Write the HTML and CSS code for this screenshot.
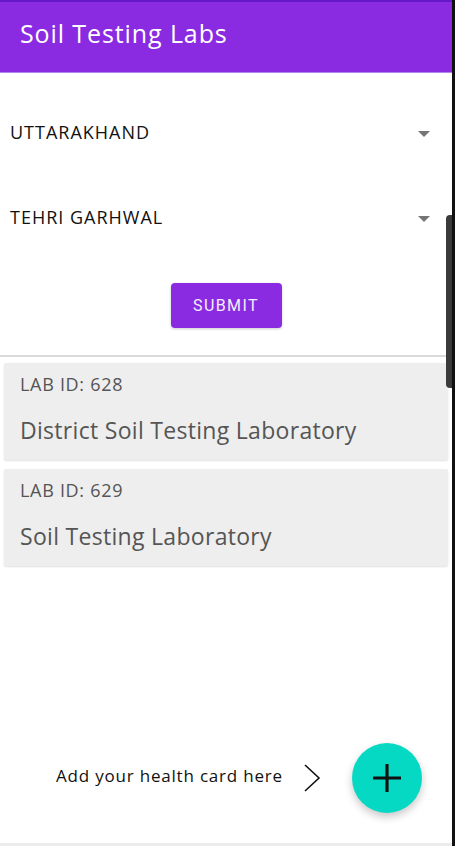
FILE: index.html
```html
<!DOCTYPE html>
<html lang="en">
<head>
<meta charset="utf-8">
<title>Soil Testing Labs</title>
<link rel="stylesheet" href="styles.css">
</head>
<body>
<div class="app">
  <header class="appbar">
    <h1 class="title">Soil Testing Labs</h1>
  </header>
  <main class="content">
    <section class="form">
      <div class="select">
        <span class="select-value">UTTARAKHAND</span>
        <span class="caret"></span>
      </div>
      <div class="select">
        <span class="select-value">TEHRI GARHWAL</span>
        <span class="caret"></span>
      </div>
      <div class="actions">
        <button class="submit">SUBMIT</button>
      </div>
    </section>
    <section class="list">
      <article class="card">
        <div class="lab-id">LAB ID: 628</div>
        <div class="lab-name">District Soil Testing Laboratory</div>
      </article>
      <article class="card">
        <div class="lab-id">LAB ID: 629</div>
        <div class="lab-name">Soil Testing Laboratory</div>
      </article>
    </section>
    <footer class="bottom">
      <span class="hint">Add your health card here</span>
      <svg class="chevron" width="20" height="30" viewBox="0 0 20 30"><path d="M3 2 L17 15 L3 28" fill="none" stroke="#111" stroke-width="1.6"/></svg>
      <button class="fab" aria-label="Add">
        <svg width="34" height="34" viewBox="0 0 34 34"><path d="M17 3 V31 M3 17 H31" stroke="#111" stroke-width="3.2"/></svg>
      </button>
    </footer>
  </main>
  <div class="scroll-thumb"></div>
</div>
</body>
</html>
```
FILE: styles.css
```css
* { box-sizing: border-box; }
html, body { margin: 0; padding: 0; }
body {
  width: 455px;
  height: 846px;
  overflow: hidden;
  background: #111;
  font-family: "Open Sans", "Noto Sans", sans-serif;
}
.app {
  position: relative;
  width: 452px;
  height: 846px;
  background: #fff;
  display: flex;
  flex-direction: column;
  border-bottom: 3px solid #ececec;
}
.appbar {
  height: 73px;
  background: #8a2be2;
  border-top: 2px solid #6418c8;
  border-bottom: 1px solid #b784ee;
  display: flex;
  align-items: center;
  padding-left: 20px;
  padding-bottom: 8px;
  flex-shrink: 0;
}
.title {
  margin: 0;
  color: #fff;
  font-weight: 400;
  font-size: 25px;
  letter-spacing: 0.9px;
}
.content {
  flex: 1;
  display: flex;
  flex-direction: column;
}
.form {
  padding-top: 16px;
  border-bottom: 2px solid #dadada;
}
.select {
  height: 85px;
  display: flex;
  align-items: center;
  justify-content: space-between;
  padding: 0 22px 0 10px;
}
.select-value {
  font-size: 18px;
  color: #111;
  letter-spacing: 1px;
}
.caret {
  width: 0;
  height: 0;
  border-left: 6px solid transparent;
  border-right: 6px solid transparent;
  border-top: 6px solid #757575;
  margin-top: 4px;
}
.actions {
  display: flex;
  justify-content: center;
  padding: 24px 0 27px;
}
.submit {
  width: 111px;
  height: 45px;
  border: none;
  border-radius: 4px;
  background: #8a2be2;
  color: #f4eefc;
  font-family: Roboto, "Open Sans", sans-serif;
  font-size: 16px;
  letter-spacing: 1.4px;
  box-shadow: 0 1px 3px rgba(0,0,0,0.2);
}
.list {
  padding: 6px 4px 0 4px;
  display: flex;
  flex-direction: column;
  gap: 9px;
}
.card {
  height: 97px;
  background: #eeeeee;
  border-radius: 2px;
  box-shadow: 0 1px 2px rgba(0,0,0,0.12);
  padding: 10px 16px 0;
  color: #555;
}
.lab-id {
  font-size: 18px;
  line-height: 22px;
  letter-spacing: 0.7px;
}
.lab-name {
  font-size: 23px;
  line-height: 30px;
  margin-top: 20px;
  letter-spacing: 0.3px;
}
.bottom {
  margin-top: auto;
  display: flex;
  align-items: center;
  padding: 0 30px 30px 56px;
}
.hint {
  font-size: 17px;
  color: #111;
  letter-spacing: 0.8px;
  margin-bottom: 5px;
}
.chevron {
  margin-left: 19px;
}
.fab {
  margin-left: auto;
  width: 70px;
  height: 70px;
  border-radius: 50%;
  border: none;
  background: #06d9c3;
  display: flex;
  align-items: center;
  justify-content: center;
  box-shadow: 0 4px 8px rgba(0,0,0,0.22);
  padding: 0;
}
.scroll-thumb {
  position: absolute;
  right: 0;
  top: 215px;
  width: 6px;
  height: 173px;
  background: #3a3a3a;
  border-radius: 4px 0 0 4px;
}
```
